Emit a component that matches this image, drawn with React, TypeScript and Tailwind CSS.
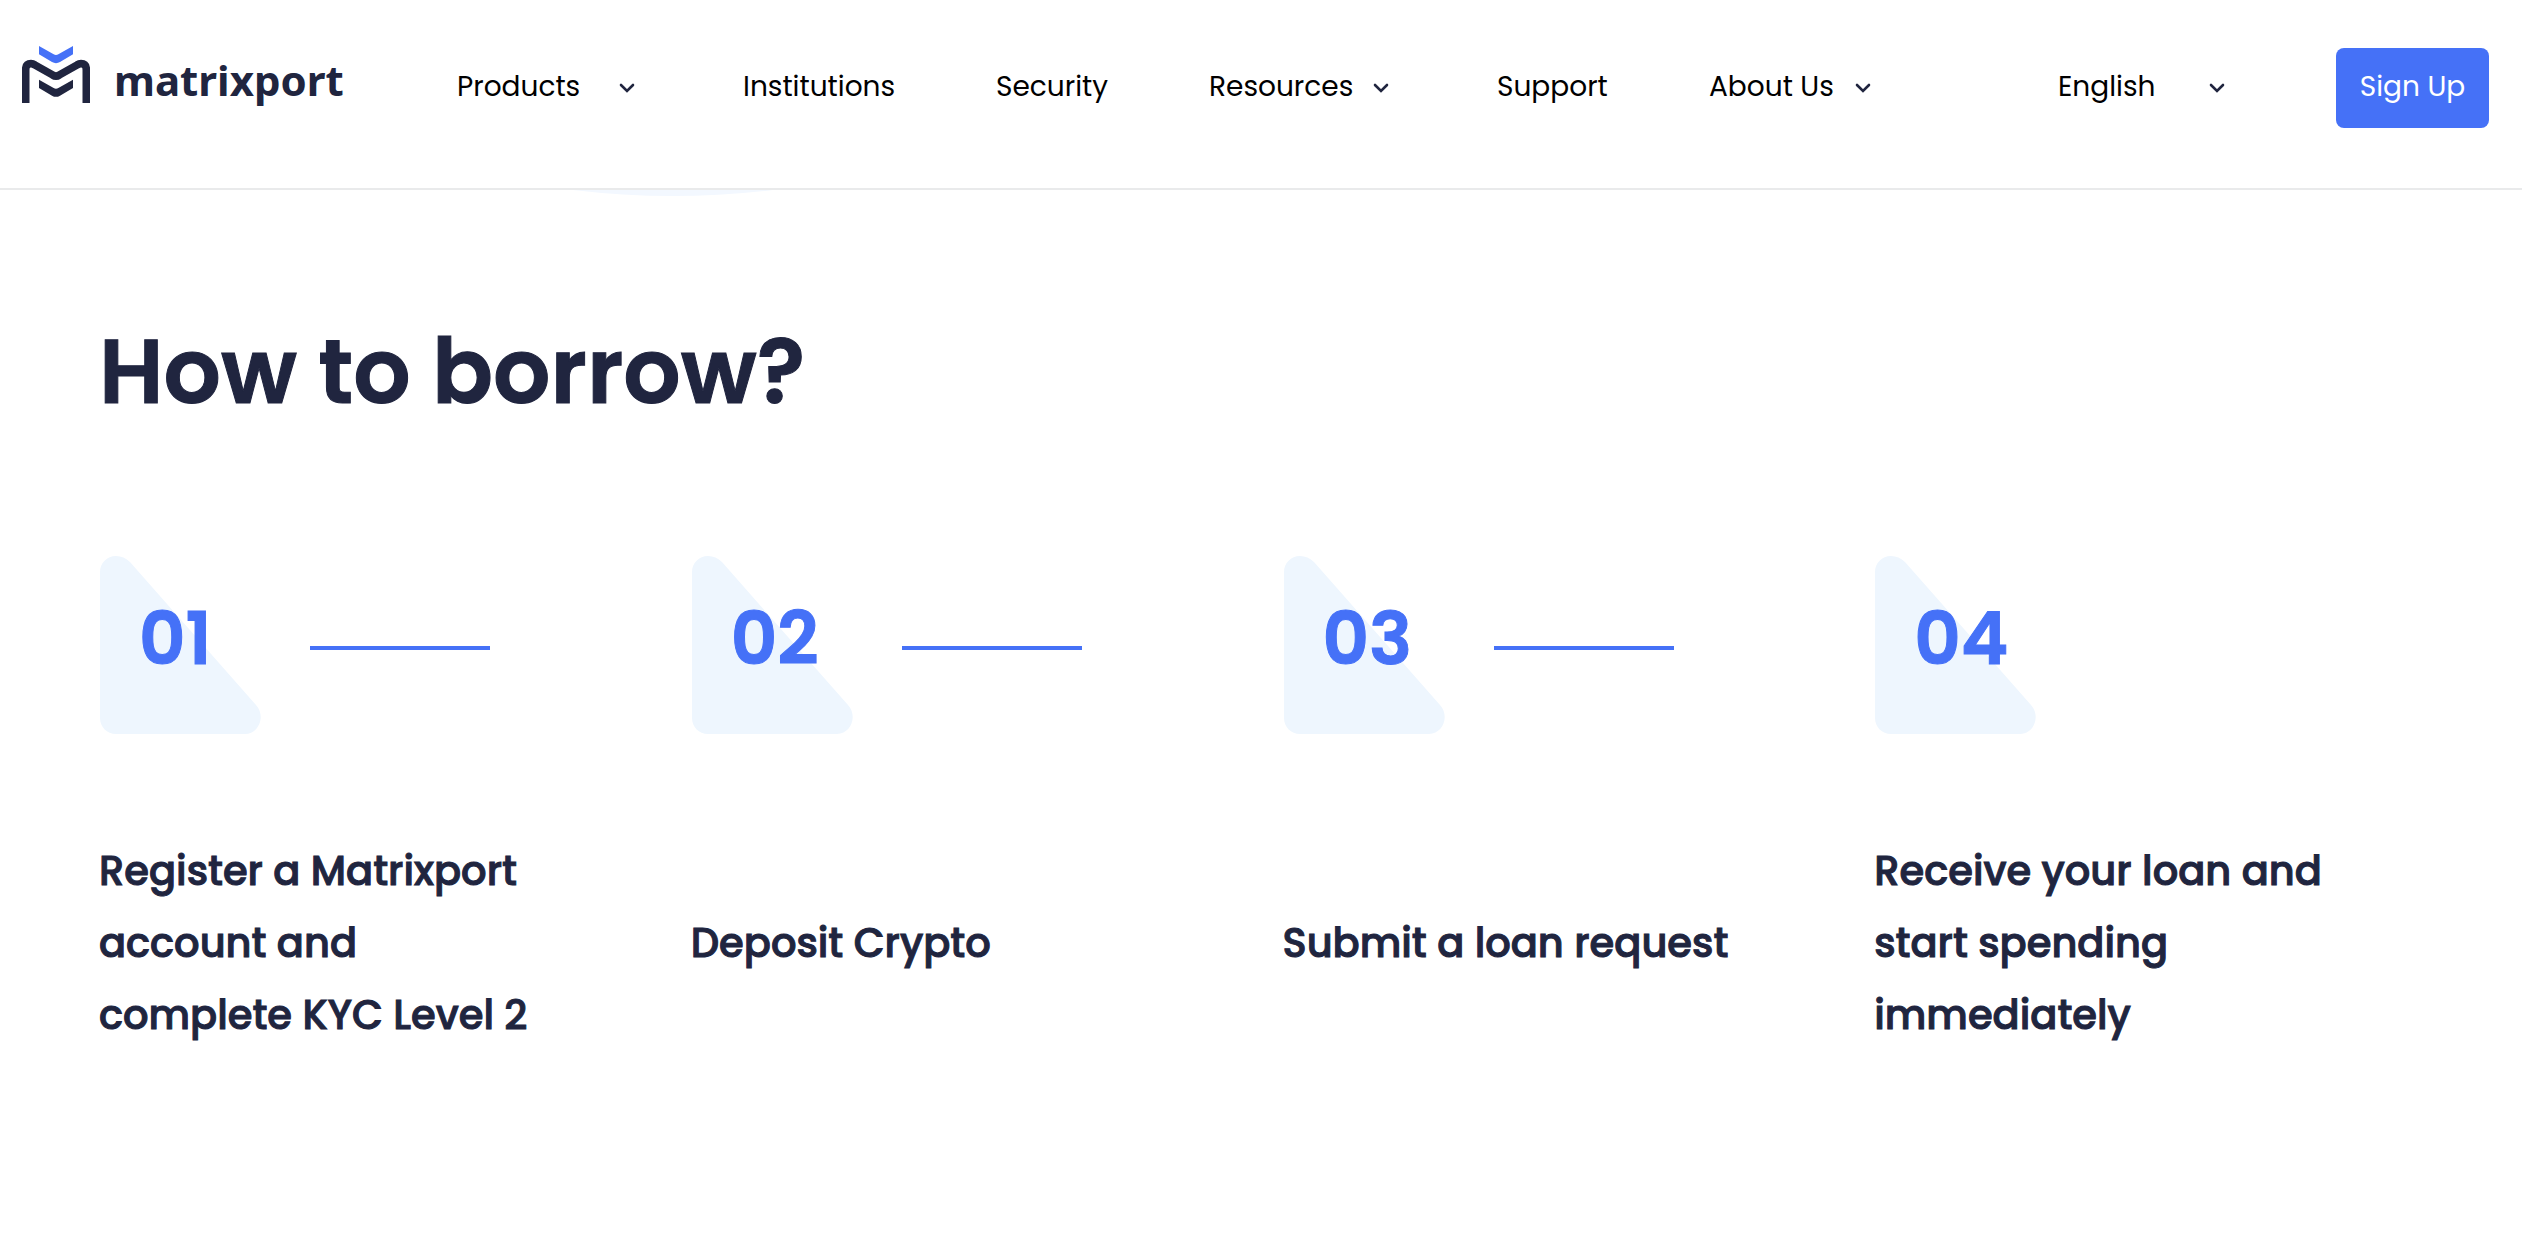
import React from 'react';

type NavItem = { label: string; menu?: boolean; width: string };

const NAV_ITEMS: NavItem[] = [
  { label: 'Products', menu: true, width: 'w-[182px]' },
  { label: 'Institutions', width: 'w-[149px]' },
  { label: 'Security', width: 'w-[109px]' },
  { label: 'Resources', menu: true, width: 'w-[184px]' },
  { label: 'Support', width: 'w-[108px]' },
  { label: 'About Us', menu: true, width: 'w-[166px]' },
];

const STEPS = [
  { number: '01', title: 'Register a Matrixport account and complete KYC Level 2' },
  { number: '02', title: 'Deposit Crypto' },
  { number: '03', title: 'Submit a loan request' },
  { number: '04', title: 'Receive your loan and start spending immediately' },
];

const App: React.FC = () => {
  return (
    <div className="min-h-screen bg-white font-['Poppins','Inter',sans-serif] text-[#20253f]">
      <Header />
      <main>
        <svg className="ml-[573px] block" width="200" height="6" viewBox="0 0 200 6" aria-hidden="true">
          <path d="M0 0Q50 6 100 6T200 0Z" fill="#f3f8ff" />
        </svg>
        <section className="pt-32 pr-14 pb-20 pl-[99px]">
          <h1 className="text-[90px] leading-24 font-semibold [-webkit-text-stroke:1px]">How to borrow?</h1>
          <ol className="mt-[136px] grid grid-cols-4">
            {STEPS.map((step, i) => (
              <Step key={step.number} number={step.number} title={step.title} last={i === STEPS.length - 1} />
            ))}
          </ol>
        </section>
      </main>
    </div>
  );
};

const Header = () => (
  <header className="flex items-center border-b-2 border-[#e9eaeb] pt-12 pr-[33px] pb-15 pl-[22px] text-[28px] leading-10 text-black">
    <a href="#" className="-mt-0.5 mr-[115px] flex w-80 shrink-0 items-start gap-6 self-start text-[#20253f]">
      <Logo />
      <span className="pt-3.5 font-['Noto_Sans',sans-serif] text-[42px] leading-10 font-bold">matrixport</span>
    </a>
    <nav className="flex items-center gap-[104px]">
      {NAV_ITEMS.map(item =>
        item.menu ? (
          <button key={item.label} type="button" className={`flex shrink-0 items-center justify-between whitespace-nowrap ${item.width}`}>
            <span className="pb-0.5">{item.label}</span>
            <Chevron />
          </button>
        ) : (
          <a key={item.label} href="#" className={`shrink-0 pb-0.5 whitespace-nowrap ${item.width}`}>{item.label}</a>
        )
      )}
    </nav>
    <div className="ml-auto flex items-center">
      <select aria-label="Language" className="w-[147px] appearance-none bg-transparent pb-0.5">
        <option>English</option>
      </select>
      <Chevron />
      <button type="button" className="ml-[107px] h-20 w-[153px] rounded-lg bg-[#4571f7] pb-0.5 whitespace-nowrap text-white">
        Sign Up
      </button>
    </div>
  </header>
);

const Step = ({ number, title, last }: { number: string; title: string; last: boolean }) => (
  <li className="flex flex-col">
    <div className="flex items-center">
      <div className="relative flex h-[178px] w-[163px] items-center pb-3 pl-10">
        <svg className="absolute top-0 left-px" width="162" height="178" viewBox="0 0 162 178" aria-hidden="true">
          <path d="M0 16C0 7 7 0 16 0Q24 0 30 6L156 149C166 160 159 178 145 178H16C7 178 0 171 0 162Z" fill="#eef6fe" />
        </svg>
        <span className="relative text-[72px] leading-20 font-semibold text-[#4571f7] [-webkit-text-stroke:1px]">{number}</span>
      </div>
      {!last && <span className="mt-1.5 ml-12 h-1 w-45 bg-[#4571f7]"></span>}
    </div>
    <p className="mt-[101px] flex flex-1 items-center pr-[136px] text-[40px] leading-18 font-medium [-webkit-text-stroke:1px]">{title}</p>
  </li>
);

const Chevron = () => (
  <svg className="shrink-0" width="24" height="24" viewBox="0 0 24 24" fill="none" stroke="#20253f" strokeWidth="2.6" aria-hidden="true">
    <path d="M6 9L12 15L18 9" strokeLinecap="round" />
  </svg>
);

const Logo = () => (
  <svg className="shrink-0" width="68" height="57" viewBox="0 0 204 171" fill="none" aria-hidden="true">
    <path d="M51 0L95 25Q102 29 109 25L153 0V25L114 48Q102 55 90 48L51 25Z" fill="#4571f7" />
    <path d="M11 171V72Q11 53 27 53Q33 53 39 57L92 87Q102 94 112 87L165 57Q171 53 177 53Q193 53 193 72V171" stroke="#20253f" strokeWidth="23" />
    <path d="M51 101L95 126Q102 130 109 126L153 101V126L114 149Q102 156 90 149L51 126Z" fill="#20253f" />
  </svg>
);

export default App;
